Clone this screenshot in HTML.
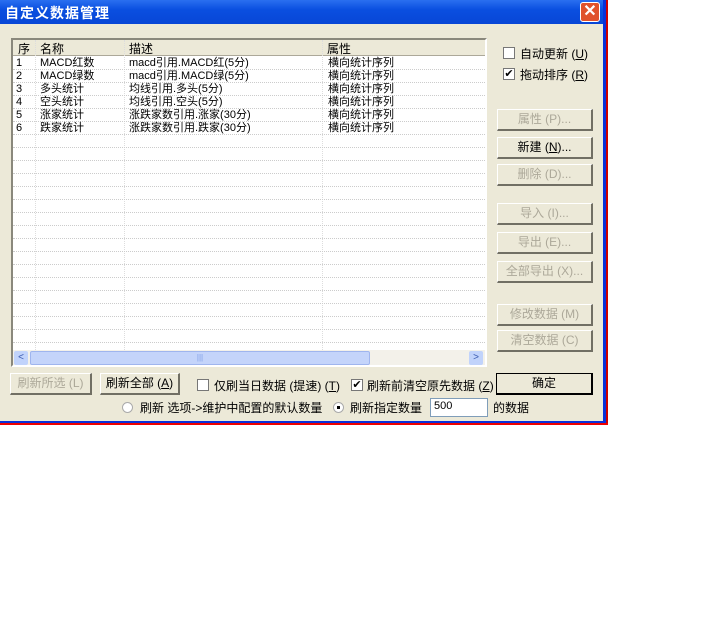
<!DOCTYPE html><html><head><meta charset="utf-8"><style>
*{box-sizing:border-box;margin:0;padding:0}
body{width:725px;height:634px;background:#fff;position:relative;overflow:hidden;font-family:"Liberation Sans","Noto Sans CJK SC","WenQuanYi Zen Hei",sans-serif;font-size:12px;color:#000}
.dlg{position:absolute;left:0;top:0;width:606px;height:424px;background:#ece9d8;border-right:3px solid #0831d9;border-bottom:3px solid #0831d9}
.red{position:absolute;left:0;top:423px;width:608px;height:2px;background:#e00}
.redr{position:absolute;left:606px;top:0;width:2px;height:424px;background:#c00}
.title{position:absolute;left:0;top:0;width:603px;height:24px;background:linear-gradient(#2a6ff0,#0a4fe0 40%,#0846d6);color:#fff;font-weight:bold;font-size:14px;padding:3px 5px;letter-spacing:1px}
.x{position:absolute;left:580px;top:2px;width:20px;height:20px;background:#e0522c;border:1px solid #fff;border-radius:3px;color:#fff;font-size:16px;text-align:center;line-height:17px;font-weight:bold}
.abs{position:absolute}
.list{left:11px;top:38px;width:476px;height:329px;background:#fff;border:2px solid #8a887c;border-right-color:#fff;border-bottom-color:#fff;overflow:hidden}
.hdr{position:absolute;left:0;top:0;width:474px;height:16px;background:#ece9d8;border-bottom:1px solid #aca899}
.hdr span,.row span{position:absolute;top:0;white-space:nowrap}
.row{position:absolute;left:0;width:474px;height:13px;border-bottom:1px dotted #ccc;line-height:12px;font-size:11px}
.vl{position:absolute;top:0;width:1px;height:310px;border-left:1px dotted #ddd}
.btn{position:absolute;height:22px;background:#ece9d8;border:1px solid #fff;border-right:2px solid #716f64;border-bottom:2px solid #716f64;text-align:center;line-height:19px;font-size:12px}
.dis{color:#aca899}
.cb{position:absolute;width:12px;height:12px;border:1px solid #777;background:#fff;font-size:11px;line-height:10px;text-align:center}
.sb{position:absolute;left:0;top:310px;width:472px;height:16px;background:#f3f1ea}
</style></head><body>
<div class="dlg"></div><div class="redr"></div><div class="red"></div>
<div class="title">自定义数据管理</div>
<div class="x">✕</div>
<div class="abs list">
 <div class="hdr"><span style="left:5px">序</span><span style="left:27px">名称</span><span style="left:116px">描述</span><span style="left:314px">属性</span></div>
 <div class="vl" style="left:22px"></div><div class="vl" style="left:111px"></div><div class="vl" style="left:309px"></div>
 <div class="row" style="top:17px"><span style="left:3px">1</span><span style="left:27px">MACD红数</span><span style="left:116px">macd引用.MACD红(5分)</span><span style="left:315px">横向统计序列</span></div>
 <div class="row" style="top:30px"><span style="left:3px">2</span><span style="left:27px">MACD绿数</span><span style="left:116px">macd引用.MACD绿(5分)</span><span style="left:315px">横向统计序列</span></div>
 <div class="row" style="top:43px"><span style="left:3px">3</span><span style="left:27px">多头统计</span><span style="left:116px">均线引用.多头(5分)</span><span style="left:315px">横向统计序列</span></div>
 <div class="row" style="top:56px"><span style="left:3px">4</span><span style="left:27px">空头统计</span><span style="left:116px">均线引用.空头(5分)</span><span style="left:315px">横向统计序列</span></div>
 <div class="row" style="top:69px"><span style="left:3px">5</span><span style="left:27px">涨家统计</span><span style="left:116px">涨跌家数引用.涨家(30分)</span><span style="left:315px">横向统计序列</span></div>
 <div class="row" style="top:82px"><span style="left:3px">6</span><span style="left:27px">跌家统计</span><span style="left:116px">涨跌家数引用.跌家(30分)</span><span style="left:315px">横向统计序列</span></div>
 <div class="row" style="top:95px"></div><div class="row" style="top:108px"></div><div class="row" style="top:121px"></div><div class="row" style="top:134px"></div><div class="row" style="top:147px"></div><div class="row" style="top:160px"></div><div class="row" style="top:173px"></div><div class="row" style="top:186px"></div><div class="row" style="top:199px"></div><div class="row" style="top:212px"></div><div class="row" style="top:225px"></div><div class="row" style="top:238px"></div><div class="row" style="top:251px"></div><div class="row" style="top:264px"></div><div class="row" style="top:277px"></div><div class="row" style="top:290px"></div>
 <div class="sb">
  <div class="abs" style="left:1px;top:1px;width:14px;height:14px;background:#c1d3fb;border-radius:2px;color:#3b5bb0;font-size:10px;text-align:center;line-height:13px">&lt;</div>
  <div class="abs" style="left:17px;top:1px;width:340px;height:14px;background:#c4d4fa;border:1px solid #9fb5ee;border-radius:2px;text-align:center;color:#7f9ee8;font-size:8px;line-height:12px">|||</div>
  <div class="abs" style="left:456px;top:1px;width:14px;height:14px;background:#c1d3fb;border-radius:2px;color:#3b5bb0;font-size:10px;text-align:center;line-height:13px">&gt;</div>
 </div>
</div>
<div class="cb" style="left:503px;top:47px"></div><div class="abs" style="left:520px;top:45px">自动更新 (<u>U</u>)</div>
<div class="cb" style="left:503px;top:68px">✔</div><div class="abs" style="left:520px;top:66px">拖动排序 (<u>R</u>)</div>
<div class="btn dis" style="left:497px;top:109px;width:96px">属性 (P)...</div>
<div class="btn" style="left:497px;top:137px;width:96px">新建 (<u>N</u>)...</div>
<div class="btn dis" style="left:497px;top:164px;width:96px">删除 (D)...</div>
<div class="btn dis" style="left:497px;top:203px;width:96px">导入 (I)...</div>
<div class="btn dis" style="left:497px;top:232px;width:96px">导出 (E)...</div>
<div class="btn dis" style="left:497px;top:261px;width:96px">全部导出 (X)...</div>
<div class="btn dis" style="left:497px;top:304px;width:96px">修改数据 (M)</div>
<div class="btn dis" style="left:497px;top:330px;width:96px">清空数据 (C)</div>
<div class="btn dis" style="left:10px;top:373px;width:82px">刷新所选 (L)</div>
<div class="btn" style="left:100px;top:373px;width:80px">刷新全部 (<u>A</u>)</div>
<div class="cb" style="left:197px;top:379px"></div><div class="abs" style="left:214px;top:377px">仅刷当日数据 (提速) (<u>T</u>)</div>
<div class="cb" style="left:351px;top:379px">✔</div><div class="abs" style="left:367px;top:377px">刷新前清空原先数据 (<u>Z</u>)</div>
<div class="btn" style="left:496px;top:373px;width:97px;border:1px solid #000;border-right:2px solid #000;border-bottom:2px solid #000">确定</div>
<div class="abs" style="left:122px;top:402px;width:11px;height:11px;border-radius:50%;background:#fff;border:1px solid #aaa"></div>
<div class="abs" style="left:140px;top:399px">刷新 选项-&gt;维护中配置的默认数量</div>
<div class="abs" style="left:333px;top:402px;width:11px;height:11px;border-radius:50%;background:#fff;border:1px solid #aaa"><div class="abs" style="left:3px;top:3px;width:3px;height:3px;background:#000"></div></div>
<div class="abs" style="left:350px;top:399px">刷新指定数量</div>
<div class="abs" style="left:430px;top:398px;width:58px;height:19px;background:#fff;border:1px solid #7f9db9;padding:1px 3px;font-size:11px">500</div>
<div class="abs" style="left:493px;top:399px">的数据</div>
</body></html>
